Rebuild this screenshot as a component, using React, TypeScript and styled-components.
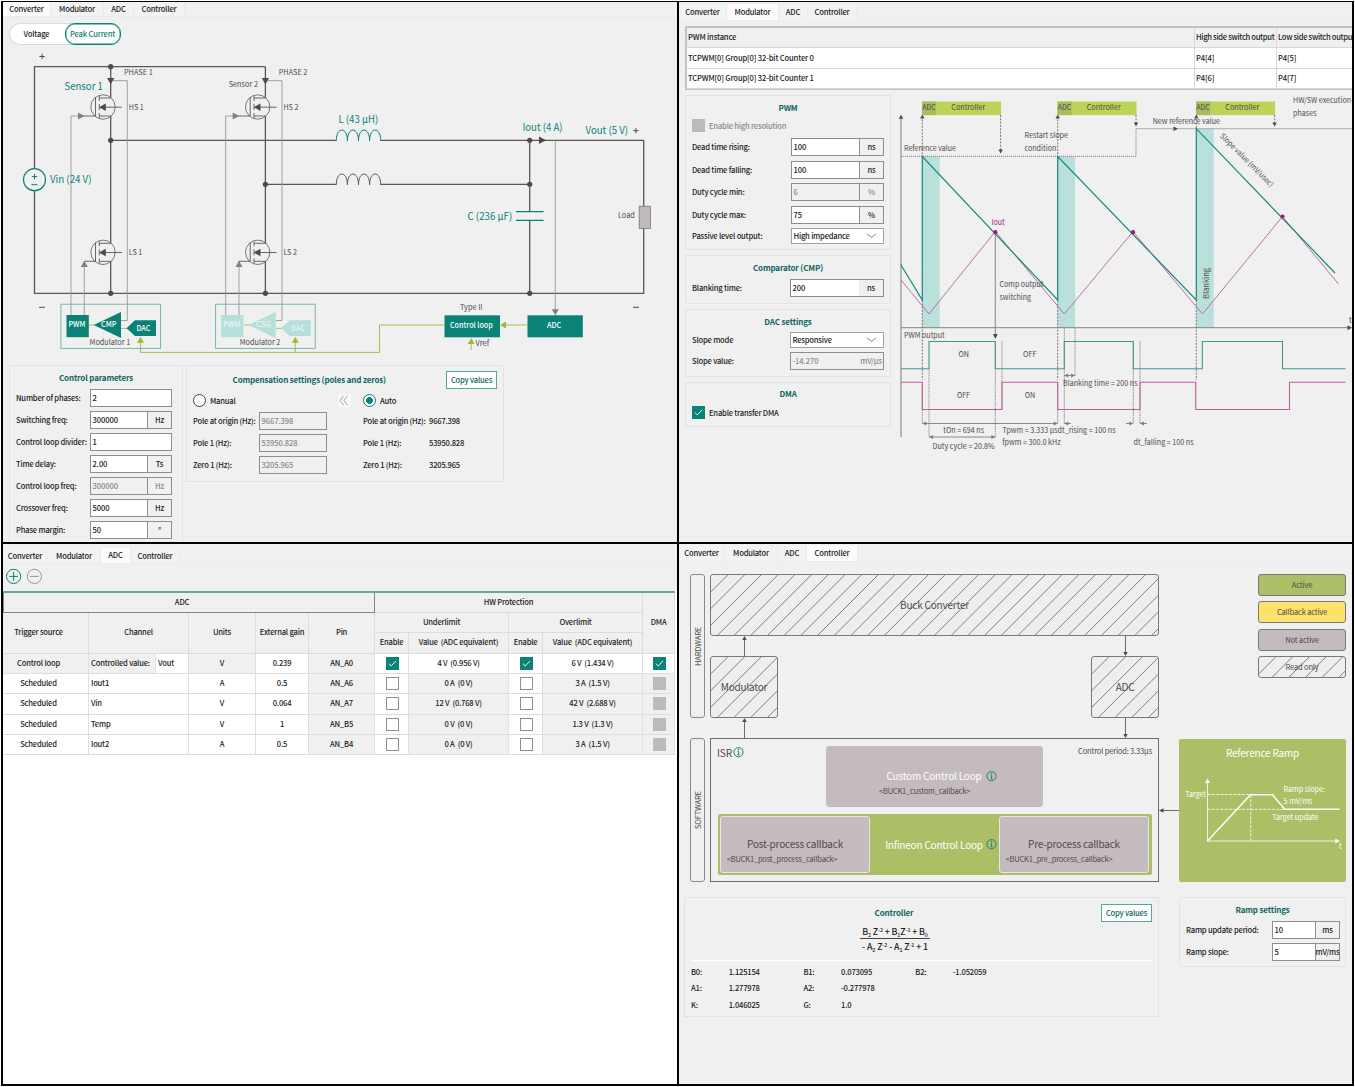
import React from "react";
import styled, { createGlobalStyle, css } from "styled-components";

const c = {
  bg: "#f0f0f0",
  teal: "#0a8276",
  tealDark: "#11665e",
  tealLight: "#b5dfd9",
  green: "#9cba3c",
  olive: "#adbf66",
  lime: "#bbd356",
  mauve: "#c4bbbe",
  magenta: "#9b1a6c",
  ink: "#1c1c1c",
  dark: "#4f4a4b",
  line: "#5c5657",
  thin: "#9b9596",
  group: "#e2e2e2",
  field: "#8e8e8e",
};

const font = `"Noto Sans CJK SC", "Noto Sans", sans-serif`;

const Global = createGlobalStyle`
  *, *::before, *::after { box-sizing: border-box; }
  body { margin: 0; background: #fff; font-family: ${font}; font-size: 7.6px; line-height: 10px; font-weight: 500; letter-spacing: -0.2px; color: ${c.ink}; }
  button { letter-spacing: inherit; }
  svg { display: block; }
  svg text { font-family: ${font}; font-weight: 400; letter-spacing: 0; }
`;

/* ---------- shell ---------- */

const Frame = styled.main`
  width: 1353px;
  height: 1085px;
  margin: 1px 0 0 1px;
  display: grid;
  grid-template: 540px 540px / 674px 673px;
  gap: 2px;
  padding: 1px 2px 2px 2px;
  background: #000;
`;

const Panel = styled.section<{ $bg?: string }>`
  background: ${(p) => p.$bg || c.bg};
  overflow: hidden;
  display: flex;
  flex-direction: column;
  min-width: 0;
`;

const TabBar = styled.nav<{ $top: number; $h: number }>`
  display: flex;
  flex: none;
  height: ${(p) => p.$top + p.$h}px;
  padding-top: ${(p) => p.$top}px;
  border-bottom: 1px solid #ebebeb;
  background: ${c.bg};
`;

const Tab = styled.button<{ $w: number; $on?: boolean }>`
  width: ${(p) => p.$w}px;
  padding: 0 0 ${(p) => (p.$on ? 1 : 0)}px;
  border: 0;
  border-right: 1px solid #eaeaea;
  background: ${(p) => (p.$on ? "#fbfbfb" : "#f2f2f2")};
  font: inherit;
  color: inherit;
  text-align: center;
  white-space: nowrap;
`;

const tabNames = ["Converter", "Modulator", "ADC", "Controller"];

function Tabs({ active, widths, top, h }: { active: number; widths: number[]; top: number; h: number }) {
  return (
    <TabBar $top={top} $h={h}>
      {tabNames.map((n, i) => (
        <Tab key={n} $w={widths[i]} $on={i === active}>
          {n}
        </Tab>
      ))}
    </TabBar>
  );
}

const Group = styled.section<{ $w: number; $h: number; $pt?: number; $px?: number }>`
  flex: none;
  width: ${(p) => p.$w}px;
  height: ${(p) => p.$h}px;
  padding: ${(p) => p.$pt ?? 7}px ${(p) => p.$px ?? 6}px 0;
  border: 1px solid ${c.group};
`;

const Title = styled.h3<{ $mb?: number }>`
  margin: 0 0 ${(p) => p.$mb ?? 5}px;
  font-size: 8px;
  line-height: 10px;
  font-weight: 700;
  letter-spacing: -0.15px;
  color: ${c.tealDark};
  text-align: center;
`;

const FormRow = styled.label<{ $pitch: number; $lw: number }>`
  display: grid;
  grid-template-columns: ${(p) => p.$lw}px auto;
  align-items: center;
  justify-content: start;
  height: ${(p) => p.$pitch}px;
  white-space: nowrap;
`;

const Label = styled.span<{ $muted?: boolean }>`
  white-space: nowrap;
  color: ${(p) => (p.$muted ? "#8a8a8a" : "inherit")};
`;

const FieldBox = styled.span<{ $w: number; $off?: boolean; $h?: number }>`
  display: flex;
  width: ${(p) => p.$w}px;
  height: ${(p) => p.$h ?? 18}px;
  border: 1px solid ${c.field};
  background: ${(p) => (p.$off ? c.bg : "#fff")};
  color: ${(p) => (p.$off ? "#8b8b8b" : c.ink)};
`;

const FieldValue = styled.span`
  flex: 1;
  display: flex;
  align-items: center;
  padding-left: 1.5px;
  letter-spacing: -0.1px;
`;

const Unit = styled.span<{ $bare?: boolean }>`
  width: 24px;
  display: flex;
  align-items: center;
  justify-content: center;
  background: ${c.bg};
  border-left: ${(p) => (p.$bare ? 0 : 1)}px solid ${c.field};
`;

type FieldProps = { value: string; unit?: string; w: number; off?: boolean; h?: number; bare?: boolean };
function Field({ value, unit, w, off, h, bare }: FieldProps) {
  return (
    <FieldBox $w={w} $off={off} $h={h}>
      <FieldValue>{value}</FieldValue>
      {unit && <Unit $bare={bare}>{unit}</Unit>}
    </FieldBox>
  );
}

const SelectBox = styled(FieldBox)`
  align-items: center;
  justify-content: space-between;
  padding: 0 6px 0 1.5px;
  border-color: #a2a2a2;
`;

function Select({ value, w }: { value: string; w: number }) {
  return (
    <SelectBox $w={w} $h={16}>
      {value}
      <svg width="11" height="6" viewBox="0 0 11 6" fill="none" stroke="#7d7d7d" strokeWidth="0.9">
        <path d="M0.8 0.8L5.5 4.4L10.2 0.8" />
      </svg>
    </SelectBox>
  );
}

const CopyButton = styled.button<{ $w: number }>`
  width: ${(p) => p.$w}px;
  height: 18px;
  padding: 0;
  border: 1px solid #53a79e;
  background: #fff;
  color: ${c.tealDark};
  font: inherit;
  text-align: center;
`;

const Box = styled.span<{ $kind: "on" | "off" | "dis" }>`
  display: inline-flex;
  align-items: center;
  justify-content: center;
  flex: none;
  width: 13px;
  height: 13px;
  ${(p) =>
    p.$kind === "on"
      ? css`background: ${c.teal};`
      : p.$kind === "dis"
        ? css`background: #bfbaba;`
        : css`background: #fff; border: 1px solid #8f8f8f;`}
`;

function Check({ kind }: { kind: "on" | "off" | "dis" }) {
  return (
    <Box $kind={kind}>
      {kind === "on" && (
        <svg width="9" height="7" viewBox="0 0 9 7" fill="none" stroke="#fff" strokeWidth="0.9">
          <path d="M0.8 3.6L3.2 5.9L8.2 0.9" />
        </svg>
      )}
    </Box>
  );
}

const CheckRow = styled.div`
  display: flex;
  align-items: center;
  gap: 4px;
  height: 13px;
`;

/* svg label whose y is its vertical centre */
type TProps = {
  x: number; y: number; w?: number; s?: number; fill?: string; a?: "start" | "middle"; weight?: number; children: string; rot?: number;
};
function T({ x, y, w, s = 7.6, fill = c.dark, a = "start", weight = 400, children, rot }: TProps) {
  return (
    <text
      x={x}
      y={y + s * 0.36}
      fontSize={s}
      fill={fill}
      textAnchor={a}
      textLength={w}
      lengthAdjust="spacingAndGlyphs"
      style={{ fontWeight: weight }}
      transform={rot ? `rotate(${rot} ${x} ${y})` : undefined}
    >
      {children}
    </text>
  );
}

/* arrow head with its tip at x,y */
function Head({ x, y, d, l = 5, h = 2.5, fill = c.dark }: { x: number; y: number; d: "u" | "d" | "l" | "r"; l?: number; h?: number; fill?: string }) {
  const p = {
    u: `${x},${y} ${x - h},${y + l} ${x + h},${y + l}`,
    d: `${x},${y} ${x - h},${y - l} ${x + h},${y - l}`,
    l: `${x},${y} ${x + l},${y - h} ${x + l},${y + h}`,
    r: `${x},${y} ${x - l},${y - h} ${x - l},${y + h}`,
  }[d];
  return <polygon points={p} fill={fill} />;
}

/* ---------- converter ---------- */

const ToggleRow = styled.div`
  flex: none;
  height: 31px;
  padding: 6px 0 0 6px;
`;

const Toggle = styled.div`
  display: flex;
  width: 112px;
  height: 22px;
  border-radius: 11px;
  background: #fff;
  box-shadow: inset 0 0 0 1px #d9d9d9;
`;

const ToggleItem = styled.button<{ $on?: boolean }>`
  width: 56px;
  border: ${(p) => (p.$on ? `1.5px solid ${c.teal}` : "0")};
  box-shadow: ${(p) => (p.$on ? `inset 0 0 0 0.4px ${c.teal}` : "none")};
  border-radius: 10px;
  background: ${(p) => (p.$on ? "#fff" : "transparent")};
  color: ${(p) => (p.$on ? c.teal : c.ink)};
  letter-spacing: -0.15px;
  padding: 0 1px 0 0;
  font: inherit;
  white-space: nowrap;
`;

function Mosfet({ y }: { y: number }) {
  return (
    <g transform={`translate(0 ${y})`} fill="none" stroke={c.line}>
      <circle cx="103" cy="0" r="12.2" strokeWidth="0.8" />
      <path d="M95.5 -10V9H84M99.3 -11V-6M99.3 -3V3M99.3 6V11M99.3 -9H110.7M99.3 9H110.7M104 0.2H122" strokeWidth="0.9" />
      <polygon points="99,0.2 105.8,-3.6 105.8,4" fill={c.dark} stroke="none" />
    </g>
  );
}

function Phase({ n, dx, faint }: { n: number; dx: number; faint?: boolean }) {
  const fill = faint ? c.tealLight : c.teal;
  const txt = faint ? "#e9f6f4" : "#fff";
  return (
    <g transform={`translate(${dx} 0)`}>
      <path d="M71 315V116H84M84.3 315V261.3M110.7 80.7H127.3V320.5H121" fill="none" stroke={c.thin} strokeWidth="0.9" />
      <Mosfet y={107} />
      <Mosfet y={252.3} />
      <path d="M110.7 66.7V98M110.7 116V243.3M110.7 261.3V293.3" stroke={c.line} strokeWidth="1.3" />
      <Head x={110.7} y={84.5} d="d" l={6.5} h={3.6} />
      <Head x={84.5} y={116} d="r" l={6.5} h={3.6} fill="#857f80" />
      <Head x={84.3} y={261} d="u" l={6} h={3.6} fill="#857f80" />
      <circle cx="110.7" cy="293.3" r="2.6" fill={c.dark} />
      <circle cx="110.7" cy={n === 1 ? 140.3 : 184.3} r="2.6" fill={c.dark} />
      <T x={124} y={72.3} w={28.7}>{`PHASE ${n}`}</T>
      <T x={128.7} y={107} w={15}>{`HS ${n}`}</T>
      <T x={128.7} y={252.3} w={13.5}>{`LS ${n}`}</T>
      <rect x="60.9" y="304.2" width="99.6" height="44.2" fill="none" stroke="#6bb0a8" strokeWidth="0.9" />
      <path d="M89 325H95M121 328.4H128" stroke={c.green} strokeWidth="0.8" />
      <rect x="66.5" y="315" width="22.3" height="22.2" fill={fill} />
      <polygon points="93.7,325 121,312 121,338" fill={fill} />
      <polygon points="126.5,328.3 135,320.3 156,320.3 156,336 135,336" fill={fill} />
      <T x={68.4} y={324.7} w={17} fill={txt} weight={500}>PWM</T>
      <T x={101} y={324.7} w={15.5} fill={txt} weight={500}>{faint ? "CSG" : "CMP"}</T>
      <T x={136.4} y={328} w={14} fill={txt} weight={500}>DAC</T>
      <T x={n === 1 ? 89.5 : 85} y={342.6} w={40.7}>{`Modulator ${n}`}</T>
    </g>
  );
}

const CircuitSvg = styled.svg`
  flex: none;
`;

function Circuit() {
  const coil = (x: number, y: number) =>
    `M${x} ${y}` + [0, 1, 2, 3].map(() => `c0 -14.4 11.1 -14.4 11.1 0`).join("");
  return (
    <CircuitSvg width="674" height="317" viewBox="3 48 674 317">
      <path d="M380.5 140.3H643.7V293.3H34.5V66.7H265.4M110.7 140.3H336.3M265.4 184.3H336.3M380.5 184.3H529.7M529.7 140.3V211.7M529.7 220.3V293.3" fill="none" stroke={c.line} strokeWidth="1.3" />
      <circle cx="110.7" cy="66.7" r="2.6" fill={c.dark} />
      <circle cx="34.5" cy="179.7" r="11" fill={c.bg} stroke={c.teal} strokeWidth="1.2" />
      <path d="M31.7 176.6H37.3M34.5 173.8V179.4M31.5 184.7H37.5" stroke={c.teal} strokeWidth="1" />
      <path d="M39.4 56.5H44.8M42.1 53.8V59.2M39 307.3H45M633.2 130.7H638.6M635.9 128V133.4M633 307.3H639" stroke={c.dark} strokeWidth="1" />
      <path d={coil(336.3, 140.8)} fill="none" stroke={c.teal} strokeWidth="1" />
      <path d={coil(336.3, 184.8)} fill="none" stroke={c.line} strokeWidth="1" />
      <path d="M555.3 140.3V310" stroke={c.thin} strokeWidth="0.9" />
      <path d="M516 211.7H543.6M516 220.3H543.6" stroke={c.teal} strokeWidth="1.2" />
      <circle cx="529.7" cy="140.3" r="2.6" fill={c.dark} />
      <circle cx="529.7" cy="184.3" r="2.6" fill={c.dark} />
      <circle cx="529.7" cy="293.3" r="2.6" fill={c.dark} />
      <Head x={546} y={140.3} d="r" l={7} h={3.8} />
      <rect x="639.2" y="206.2" width="11.3" height="22.2" fill="#bfbbbb" stroke="#7b7576" strokeWidth="0.8" />
      <Phase n={1} dx={0} />
      <Phase n={2} dx={154.7} faint />
      <path d="M527 325H505M444 325H379.5V352.4H140.5V342M295.3 352.4V342M471.2 350V343" fill="none" stroke={c.green} strokeWidth="0.9" />
      <Head x={140.5} y={336.7} d="u" l={6} h={3.5} fill={c.green} />
      <Head x={295.3} y={336.7} d="u" l={6} h={3.5} fill={c.green} />
      <Head x={471.2} y={338} d="u" l={6} h={3.5} fill={c.green} />
      <Head x={500} y={325} d="l" l={6} h={3.5} fill={c.green} />
      <Head x={555.3} y={315.3} d="d" l={6} h={3.5} fill="#857f80" />
      <rect x="444.5" y="315.3" width="55.5" height="22" fill={c.teal} />
      <rect x="527.5" y="315.3" width="55.3" height="22" fill={c.teal} />
      <T x={450} y={324.8} w={42.7} fill="#fff" weight={500}>Control loop</T>
      <T x={547} y={324.8} w={14.3} fill="#fff" weight={500}>ADC</T>
      <T x={460} y={306.8} w={22.5}>Type II</T>
      <T x={475.5} y={343} w={13.7}>Vref</T>
      <T x={618} y={215.7} w={16.8}>Load</T>
      <T x={228.7} y={84.7} w={29.3}>Sensor 2</T>
      <T x={64.5} y={86.5} w={38.3} s={10.4} fill={c.teal}>Sensor 1</T>
      <T x={50} y={179.7} w={41.5} s={10.4} fill={c.teal}>Vin (24 V)</T>
      <T x={338.5} y={119.2} w={39.7} s={10.4} fill={c.teal}>L (43 μH)</T>
      <T x={522.5} y={127} w={40} s={10.4} fill={c.teal}>Iout (4 A)</T>
      <T x={585.5} y={130} w={42.5} s={10.4} fill={c.teal}>Vout (5 V)</T>
      <T x={467.5} y={216} w={44.7} s={10.4} fill={c.teal}>C (236 μF)</T>
    </CircuitSvg>
  );
}

const Bottom = styled.div`
  display: flex;
  gap: 3px;
  padding-left: 6px;
`;

const params: [string, string, string?, boolean?][] = [
  ["Number of phases:", "2"],
  ["Switching freq:", "300000", "Hz"],
  ["Control loop divider:", "1"],
  ["Time delay:", "2.00", "Ts"],
  ["Control loop freq:", "300000", "Hz", true],
  ["Crossover freq:", "5000", "Hz"],
  ["Phase margin:", "50", "°"],
];

const CompHead = styled.header`
  display: flex;
  align-items: flex-start;
  justify-content: flex-end;
  gap: 60px;
  height: 22px;
  & > h3 { margin-top: 4px; white-space: nowrap; }
`;

const CompGrid = styled.div`
  display: grid;
  grid-template-columns: 66px 104px 66px auto;
  align-items: center;
  grid-auto-rows: 22.1px;
  white-space: nowrap;
`;

const RadioRow = styled.div`
  display: grid;
  grid-template-columns: 145px 25px auto;
  align-items: center;
  height: 15px;
  margin-bottom: 2px;
`;

const Radio = styled.label`
  display: flex;
  align-items: center;
  gap: 4px;
`;

const Dot = styled.i<{ $on?: boolean }>`
  width: 13px;
  height: 13px;
  border-radius: 50%;
  border: 1px solid ${(p) => (p.$on ? c.teal : "#444")};
  background: ${(p) => (p.$on ? `radial-gradient(${c.teal} 0 3.1px, #fff 3.7px)` : "#fff")};
`;

const Collapse = styled.button`
  width: 13px;
  height: 13px;
  padding: 0 0 0 1px;
  border: 0;
  border-radius: 2px;
  background: #f9f9f9;
`;

const comp = [
  ["Pole at origin (Hz):", "9667.398"],
  ["Pole 1 (Hz):", "53950.828"],
  ["Zero 1 (Hz):", "3205.965"],
];

function Converter() {
  return (
    <Panel>
      <Tabs active={0} widths={[48, 53, 30, 51]} top={0} h={15} />
      <ToggleRow>
        <Toggle>
          <ToggleItem>Voltage</ToggleItem>
          <ToggleItem $on>Peak Current</ToggleItem>
        </Toggle>
      </ToggleRow>
      <Circuit />
      <Bottom>
        <Group $w={174} $h={190}>
          <Title $mb={3.5}>Control parameters</Title>
          {params.map(([l, v, u, off]) => (
            <FormRow key={l} $pitch={22.15} $lw={74}>
              <Label>{l}</Label>
              <Field value={v} unit={u} w={82} off={off} />
            </FormRow>
          ))}
        </Group>
        <Group $w={318} $h={117} $pt={5}>
          <CompHead>
            <Title>Compensation settings (poles and zeros)</Title>
            <CopyButton $w={51}>Copy values</CopyButton>
          </CompHead>
          <RadioRow>
            <Radio><Dot />Manual</Radio>
            <Collapse>
              <svg width="10" height="11" viewBox="0 0 10 11" fill="none" stroke="#8b8b8b" strokeWidth="0.8">
                <path d="M4.6 0.7L1 5.5L4.6 10.3M8.6 0.7L5 5.5L8.6 10.3" />
              </svg>
            </Collapse>
            <Radio><Dot $on />Auto</Radio>
          </RadioRow>
          <CompGrid>
            {comp.map(([l, v]) => (
              <React.Fragment key={l}>
                <Label>{l}</Label>
                <Field value={v} w={68} off />
                <Label>{l}</Label>
                <Label>{v}</Label>
              </React.Fragment>
            ))}
          </CompGrid>
        </Group>
      </Bottom>
    </Panel>
  );
}

/* ---------- modulator ---------- */

const PwmTable = styled.div`
  flex: none;
  margin: 5px 0 0 6px;
  display: grid;
  grid-template: 20px 21px 20px / 508px 82px 77px;
  border: 2px solid #c3c3c3;
  border-right: 0;
  height: 64px;
`;

const PwmCell = styled.span<{ $head?: boolean; $tight?: boolean }>`
  display: flex;
  align-items: center;
  padding: 0 0 1px 1px;
  white-space: nowrap;
  letter-spacing: ${(p) => (p.$tight ? -0.31 : -0.16)}px;
  background: ${(p) => (p.$head ? c.bg : "#fff")};
  border-right: 1px solid #d8d8d8;
  border-bottom: 1px solid #d8d8d8;
`;

const pwmRows = [
  ["PWM instance", "High side switch output", "Low side switch output"],
  ["TCPWM[0] Group[0] 32-bit Counter 0", "P4[4]", "P4[5]"],
  ["TCPWM[0] Group[0] 32-bit Counter 1", "P4[6]", "P4[7]"],
];

const ModBody = styled.div`
  display: flex;
  padding: 5px 0 0 6px;
`;

const Stack = styled.div<{ $gap: number }>`
  display: flex;
  flex-direction: column;
  gap: ${(p) => p.$gap}px;
`;

const PwmFields = styled(Stack)`
  margin-top: 4px;
`;

const MvUnit = styled.span`
  align-self: center;
  padding-right: 1px;
`;

const SlopeSvg = styled.svg`
  flex: none;
`;

function Slope() {
  const dash = { stroke: "#6d6768", strokeWidth: 0.9, strokeDasharray: "2 1.3", fill: "none" };
  return (
    <SlopeSvg width="461" height="368" viewBox="891 95 461 368">
      {[922.3, 1057.7, 1196.3].map((x, i) => (
        <g key={x}>
          <rect x={x} y={i === 2 ? 128.7 : 156.5} width="17.4" height={i === 2 ? 199 : 171.2} fill="#bae0db" />
          <rect x={x - 0.2} y="101.5" width="79" height="13.6" fill={c.lime} />
          <rect x={x - 0.2} y="101.5" width="14" height="13.6" fill="#a8bd5c" />
          <T x={x} y={107.3} w={13.5}>ADC</T>
          <T x={x + 29} y={107.3} w={34}>Controller</T>
          <path d={`M${x} 116V${i === 2 ? 128 : 156}M${x} 300V380`} {...dash} />
          <path d={`M${x + 78.3} 115V${i === 0 ? 150 : 123}`} {...dash} />
          <Head x={x} y={114.5} d="u" l={4} h={2.2} />
          <Head x={x + 78.3} y={i === 0 ? 153.5 : 126.5} d="d" l={4} h={2.2} />
        </g>
      ))}
      <path d="M901 437V118" stroke="#8a8586" strokeWidth="1.1" />
      <Head x={901} y={114.8} d="u" l={4} h={2.3} />
      <path d="M901 327.7H1350" stroke="#7d7879" strokeWidth="0.9" />
      <Head x={1352} y={327.7} d="r" l={4.5} h={2.5} />
      <path d="M901 156.3H1136V128.7H1352" fill="none" stroke="#7b7677" strokeWidth="0.9" strokeDasharray="1.2 0.8" />
      <Head x={1178} y={128.7} d="r" l={4.5} h={2.3} />
      <path d="M995.3 232V336" stroke="#7d7879" strokeWidth="0.9" />
      <Head x={995.3} y={339} d="d" l={5} h={2.4} />
      <path
        d="M922.3 382V423.5M929 368V437M995.3 341V437M1002 341V409M1057.7 382V423.5M1064.3 328V423.5M1075 328V375.5M1133.3 341V423.5M1140 341V423.5"
        fill="none" stroke="#807b7c" strokeWidth="0.9" strokeDasharray="1.4 0.9"
      />
      <path d="M901 280L929 314L995.3 231.5L1064.3 314L1133 231.5L1202.5 314L1282.5 216.5L1338.5 284" fill="none" stroke="#b7629a" strokeWidth="0.9" />
      <path d="M901 265L922.3 300V156.5L1057.7 300V156.5L1196.3 300V128.7L1335 273" fill="none" stroke="#16897c" strokeWidth="1.2" />
      <path d="M901 368.7H929V341.5H995.3V368.7H1064.3V341.5H1133.3V368.7H1202.3V341.5H1282.5V368.7H1345.5" fill="none" stroke="#3f978d" strokeWidth="1.1" />
      <path d="M901 382.2H922.3V409.5H1002V382.2H1057.7V409.5H1140V382.2H1195.7V409.5H1289.5V382.2H1345.5" fill="none" stroke="#b7629a" strokeWidth="1.1" />
      {[[995.3, 232.2], [1133, 232.2], [1282.5, 216.5]].map(([x, y]) => (
        <circle key={x} cx={x} cy={y} r="2.1" fill={c.magenta} />
      ))}
      <path d="M922.3 423.5H1057.7M1064.3 423.5H1071M1126 423.5H1133M1140 423.5H1147M929 437H995.3M1064.3 375.5H1075" stroke="#807b7c" strokeWidth="0.9" />
      {([[922.3, 423.5, "l"], [1057.7, 423.5, "r"], [1064.3, 423.5, "l"], [1133.3, 423.5, "r"], [1140, 423.5, "l"], [929, 437, "l"], [995.3, 437, "r"], [1064.3, 375.5, "l"], [1075, 375.5, "r"]] as [number, number, "l" | "r"][]).map(([x, y, d]) => (
        <Head key={`${x}-${y}`} x={x} y={y} d={d} l={4} h={2} fill="#807b7c" />
      ))}
      <T x={904} y={148.3} w={52}>Reference value</T>
      <T x={1024.5} y={135.7} w={43.5}>Restart slope</T>
      <T x={1024.5} y={148.2} w={31.8}>condition</T>
      <T x={1152.7} y={121} w={67.3}>New reference value</T>
      <T x={1293} y={100.5} w={58}>HW/SW execution</T>
      <T x={1293} y={113} w={23.5}>phases</T>
      <T x={1247} y={160} a="middle" rot={45} w={72}>Slope value (mV/usec)</T>
      <T x={1206.5} y={299} rot={-90} w={31}>Blanking</T>
      <T x={991.5} y={222.3} w={13.2} fill={c.magenta}>Iout</T>
      <T x={999.5} y={284.7} w={44}>Comp output</T>
      <T x={999.5} y={297.2} w={31.5}>switching</T>
      <T x={1349} y={320.3}>t</T>
      <T x={904} y={335} w={40.7}>PWM output</T>
      <T x={958.5} y={354.6} w={10.5}>ON</T>
      <T x={957} y={395.6} w={13}>OFF</T>
      <T x={1023} y={354.6} w={13.5}>OFF</T>
      <T x={1024.7} y={395.6} w={10.5}>ON</T>
      <T x={1063} y={383} w={74.5}>Blanking time = 200 ns</T>
      <T x={943.3} y={430} w={40.7}>tOn = 694 ns</T>
      <T x={932.5} y={446.3} w={62}>Duty cycle = 20.8%</T>
      <T x={1002.5} y={430} w={55}>Tpwm = 3.333 μs</T>
      <T x={1057.5} y={430} w={58}>dt_rising = 100 ns</T>
      <T x={1002.3} y={442} w={58.3}>fpwm = 300.0 kHz</T>
      <T x={1133.5} y={442} w={60}>dt_falling = 100 ns</T>
    </SlopeSvg>
  );
}

function Modulator() {
  const rows: [string, string, string, boolean?][] = [
    ["Dead time rising:", "100", "ns"],
    ["Dead time falling:", "100", "ns"],
    ["Duty cycle min:", "6", "%", true],
    ["Duty cycle max:", "75", "%"],
  ];
  return (
    <Panel>
      <Tabs active={1} widths={[48, 52, 29, 49]} top={2} h={17} />
      <PwmTable>
        {pwmRows.map((r, i) =>
          r.map((t, j) => (
            <PwmCell key={t} $head={i === 0} $tight={i === 0 && j > 0}>{t}</PwmCell>
          ))
        )}
      </PwmTable>
      <ModBody>
        <Stack $gap={5}>
          <Group $w={206} $h={155}>
            <Title $mb={6}>PWM</Title>
            <CheckRow>
              <Check kind="dis" />
              <Label $muted>Enable high resolution</Label>
            </CheckRow>
            <PwmFields $gap={0}>
              {rows.map(([l, v, u, off]) => (
                <FormRow key={l} $pitch={22.5} $lw={99}>
                  <Label>{l}</Label>
                  <Field value={v} unit={u} w={93} off={off} />
                </FormRow>
              ))}
              <FormRow $pitch={20} $lw={99}>
                <Label>Passive level output:</Label>
                <Select value="High impedance" w={93} />
              </FormRow>
            </PwmFields>
          </Group>
          <Group $w={206} $h={49}>
            <Title $mb={4}>Comparator (CMP)</Title>
            <FormRow $pitch={22} $lw={98}>
              <Label>Blanking time:</Label>
              <Field value="200" unit="ns" w={94} bare />
            </FormRow>
          </Group>
          <Group $w={206} $h={68}>
            <Title $mb={2}>DAC settings</Title>
            <FormRow $pitch={22} $lw={98}>
              <Label>Slope mode</Label>
              <Select value="Responsive" w={94} />
            </FormRow>
            <FormRow $pitch={20} $lw={98}>
              <Label>Slope value:</Label>
              <FieldBox $w={94} $off>
                <FieldValue>-14.270</FieldValue>
                <MvUnit>mV/μs</MvUnit>
              </FieldBox>
            </FormRow>
          </Group>
          <Group $w={206} $h={45} $pt={6}>
            <Title $mb={7}>DMA</Title>
            <CheckRow>
              <Check kind="on" />
              <Label>Enable transfer DMA</Label>
            </CheckRow>
          </Group>
        </Stack>
        <Slope />
      </ModBody>
    </Panel>
  );
}

/* ---------- ADC ---------- */

const ToolBar = styled.div`
  flex: none;
  display: flex;
  gap: 5px;
  height: 27px;
  padding: 4px 0 0 3px;
  background: ${c.bg};
`;

const AdcTable = styled.table`
  width: 672px;
  table-layout: fixed;
  border-collapse: separate;
  border-spacing: 0;
  border-top: 2px solid #6ea59e;
  color: ${c.ink};
  font-size: 7.6px;
  line-height: 10px;
`;

const Th = styled.th<{ $frame?: boolean; $shift?: number }>`
  padding: 0 ${(p) => p.$shift ?? 0}px 1px 0;
  font-weight: 500;
  white-space: nowrap;
  background: ${c.bg};
  border-right: 1px solid #dcdcdc;
  border-bottom: 1px solid #dcdcdc;
  ${(p) => p.$frame && css`border: 1px solid #808784; border-top: 0;`}
`;

const Td = styled.td<{ $gray?: boolean; $left?: boolean; $shift?: number }>`
  height: 20.4px;
  padding: 0 ${(p) => p.$shift ?? 0}px 1px ${(p) => (p.$left ? 2 : 0)}px;
  text-align: ${(p) => (p.$left ? "left" : "center")};
  white-space: nowrap;
  background: ${(p) => (p.$gray ? c.bg : "#fff")};
  border-right: 1px solid #e0e0e0;
  border-bottom: 1px solid #dedede;
  & > span { vertical-align: middle; margin: 1px 0 0 2px; }
`;

const colW = [86, 67, 33, 67, 53, 66, 34, 100, 34, 100, 32];

const adcRows = [
  ["Scheduled", "Iout1", "A", "0.5", "AN_A6", "0 A \u00a0(0 V)", "3 A \u00a0(1.5 V)"],
  ["Scheduled", "Vin", "V", "0.064", "AN_A7", "12 V \u00a0(0.768 V)", "42 V \u00a0(2.688 V)"],
  ["Scheduled", "Temp", "V", "1", "AN_B5", "0 V \u00a0(0 V)", "1.3 V \u00a0(1.3 V)"],
  ["Scheduled", "Iout2", "A", "0.5", "AN_B4", "0 A \u00a0(0 V)", "3 A \u00a0(1.5 V)"],
];

function Adc() {
  return (
    <Panel $bg="#fff">
      <Tabs active={2} widths={[45, 53, 30, 49]} top={4} h={16} />
      <ToolBar>
        <svg width="16" height="16" viewBox="0 0 16 16" fill="none" stroke={c.teal}>
          <circle cx="7.6" cy="8.4" r="7.1" />
          <path d="M7.6 4V12.8M3.2 8.4H12" />
        </svg>
        <svg width="16" height="16" viewBox="0 0 16 16" fill="none" stroke="#979797">
          <circle cx="7.4" cy="8.4" r="7.1" />
          <path d="M3 8.4H11.8" />
        </svg>
      </ToolBar>
      <AdcTable>
        <colgroup>{colW.map((w, i) => <col key={i} style={{ width: w }} />)}</colgroup>
        <thead>
          <tr style={{ height: 19.5 }}>
            <Th colSpan={6} $frame $shift={14}>ADC</Th>
            <Th colSpan={4}>HW Protection</Th>
            <Th rowSpan={3}>DMA</Th>
          </tr>
          <tr style={{ height: 20.5 }}>
            <Th rowSpan={2} $shift={14}>Trigger source</Th>
            <Th rowSpan={2} colSpan={2}>Channel</Th>
            <Th rowSpan={2}>Units</Th>
            <Th rowSpan={2}>External gain</Th>
            <Th rowSpan={2}>Pin</Th>
            <Th colSpan={2}>Underlimit</Th>
            <Th colSpan={2}>Overlimit</Th>
          </tr>
          <tr style={{ height: 20.5 }}>
            <Th>Enable</Th>
            <Th>{"Value \u00a0(ADC equivalent)"}</Th>
            <Th>Enable</Th>
            <Th>{"Value \u00a0(ADC equivalent)"}</Th>
          </tr>
        </thead>
        <tbody>
          <tr>
            <Td $gray $shift={14}>Control loop</Td>
            <Td $gray $left>Controlled value:</Td>
            <Td $left>Vout</Td>
            <Td $gray>V</Td>
            <Td>0.239</Td>
            <Td $gray>AN_A0</Td>
            <Td><Check kind="on" /></Td>
            <Td>{"4 V \u00a0(0.956 V)"}</Td>
            <Td><Check kind="on" /></Td>
            <Td>{"6 V \u00a0(1.434 V)"}</Td>
            <Td><Check kind="on" /></Td>
          </tr>
          {adcRows.map((r) => (
            <tr key={r[1]}>
              <Td $shift={14}>{r[0]}</Td>
              <Td $left colSpan={2}>{r[1]}</Td>
              <Td>{r[2]}</Td>
              <Td>{r[3]}</Td>
              <Td $gray>{r[4]}</Td>
              <Td><Check kind="off" /></Td>
              <Td $gray>{r[5]}</Td>
              <Td><Check kind="off" /></Td>
              <Td $gray>{r[6]}</Td>
              <Td $gray><Check kind="dis" /></Td>
            </tr>
          ))}
        </tbody>
      </AdcTable>
    </Panel>
  );
}

/* ---------- controller ---------- */

const CtlBody = styled.div`
  display: flex;
  flex-direction: column;
  padding: 12px 0 0 11px;
  color: ${c.dark};
  font-weight: 400;
`;

const Row = styled.div<{ $gap?: number }>`
  display: flex;
  gap: ${(p) => p.$gap ?? 0}px;
`;

const SideBar = styled.div`
  flex: none;
  width: 15px;
  height: 144px;
  border: 1px solid #8d8788;
  border-radius: 3px;
  display: flex;
  align-items: center;
  justify-content: center;
  writing-mode: vertical-rl;
  transform: rotate(180deg);
`;

const HwArea = styled.div`
  width: 449px;
  display: flex;
  flex-direction: column;
`;

const Spread = styled.div<{ $px?: number }>`
  display: flex;
  justify-content: space-between;
  padding: 0 ${(p) => p.$px ?? 0}px;
`;

const HatchBox = styled.div<{ $w: number; $h: number; $s?: number }>`
  position: relative;
  width: ${(p) => p.$w}px;
  height: ${(p) => p.$h}px;
  border: 1px solid #7d7778;
  border-radius: 3px;
  overflow: hidden;
  display: flex;
  align-items: center;
  justify-content: center;
  background: #eee;
  font-size: ${(p) => p.$s ?? 10}px;
  & > svg { position: absolute; inset: 0; }
  & > span { position: relative; }
`;

function Hatch({ w, h, s, children }: { w: number; h: number; s?: number; children: string }) {
  const lines = [];
  for (let t = 16.7; t < w + h; t += 16.7) lines.push(`M${t} 0L${t - h} ${h}`);
  return (
    <HatchBox $w={w} $h={h} $s={s}>
      <svg width={w} height={h}>
        <path d={lines.join("")} stroke="#5f595a" strokeWidth="0.75" />
      </svg>
      <span>{children}</span>
    </HatchBox>
  );
}

function VArrow({ d }: { d: "u" | "d" }) {
  return (
    <svg width="7" height="20" viewBox="0 0 7 20">
      <path d={d === "u" ? "M3.5 20V3" : "M3.5 0V17"} stroke="#6f696a" strokeWidth="1" />
      <Head x={3.5} y={d === "u" ? 0 : 20} d={d} l={4} h={2.2} />
    </svg>
  );
}

const Legend = styled.div`
  margin-left: 94px;
  display: flex;
  flex-direction: column;
  gap: 5.3px;
`;

const LegendItem = styled.div<{ $bg: string }>`
  width: 88px;
  height: 22px;
  display: flex;
  align-items: center;
  justify-content: center;
  border: 1px solid #7d7778;
  border-radius: 3px;
  background: ${(p) => p.$bg};
`;

const Isr = styled.div`
  width: 449px;
  height: 144px;
  margin-left: 5px;
  border: 1px solid #6f696a;
  padding: 7px 6px 0;
`;

const IsrTop = styled.div`
  display: grid;
  grid-template-columns: 109px 217px 109px;
  height: 61px;
`;

const IsrName = styled.div`
  display: flex;
  align-items: center;
  gap: 1px;
  height: 13px;
  font-size: 10.3px;
`;

const Period = styled.div`
  text-align: right;
`;

const Callback = styled.div<{ $light?: boolean; $line?: boolean; $w?: number }>`
  width: ${(p) => p.$w ?? 150}px;
  display: flex;
  flex-direction: column;
  align-items: center;
  background: ${c.mauve};
  border: 1px solid ${(p) => (p.$line ? "#e9e4e6" : c.mauve)};
  border-radius: 3px;
  color: ${(p) => (p.$light ? "#fff" : c.dark)};
  font-size: 10px;
  line-height: 14px;
  padding-top: ${(p) => (p.$line ? 20 : 22)}px;
`;

const CbTitle = styled.div<{ $ml?: number }>`
  display: flex;
  align-items: center;
  gap: 4px;
  margin-left: ${(p) => p.$ml ?? 0}px;
  white-space: nowrap;
`;

const CbName = styled.small<{ $shift: number }>`
  font-size: 7.5px;
  line-height: 12px;
  margin-top: 2px;
  margin-right: ${(p) => p.$shift}px;
  color: ${c.dark};
`;

const Loop = styled.div`
  margin: 7px 0 0 1px;
  width: 434px;
  height: 61px;
  padding: 2px 3px 2px 2px;
  border-radius: 2px;
  background: ${c.olive};
  display: flex;
  justify-content: space-between;
  align-items: stretch;
`;

const LoopTitle = styled(CbTitle)`
  color: #fff;
  font-size: 10px;
  gap: 3px;
`;

const RampCard = styled.div`
  width: 167px;
  height: 143px;
  margin-top: 1px;
  border-radius: 2px;
  background: ${c.olive};
  color: #fff;
  font-size: 10px;
  text-align: center;
  padding-top: 9px;
  & > svg { margin-top: 12px; }
`;

function Info() {
  return (
    <svg width="11" height="11" viewBox="0 0 11 11">
      <circle cx="5.5" cy="5.2" r="4.6" fill="none" stroke="#1f8277" strokeWidth="1" />
      <path d="M4.5 4.4H5.6V7.8M4.3 7.8H6.8" fill="none" stroke="#1f8277" strokeWidth="1" />
      <circle cx="5.5" cy="2.6" r="0.75" fill="#1f8277" />
    </svg>
  );
}

function Ramp() {
  return (
    <svg width="167" height="90" viewBox="1179 770 167 90">
      <g stroke="#fff" fill="none">
        <path d="M1207.5 841.5V782M1207.5 841H1336" strokeWidth="0.8" />
        <path d="M1207.5 794.5H1250M1207.5 809.3H1284M1250.7 795V841" strokeWidth="0.8" strokeDasharray="3 1.3" />
        <path d="M1207.5 841L1250.5 794.7H1272.5L1284.7 809.3H1339.7" strokeWidth="1.4" />
      </g>
      <Head x={1207.5} y={778.5} d="u" l={4.5} h={2.4} fill="#fff" />
      <Head x={1339.8} y={841} d="r" l={4.5} h={2.4} fill="#fff" />
      <T x={1185.3} y={794} w={20.5} fill="#fff">Target</T>
      <T x={1283.5} y={789.7} w={41.5} fill="#fff">Ramp slope:</T>
      <T x={1283.5} y={801.7} w={29} fill="#fff">5 mV/ms</T>
      <T x={1272.3} y={817} w={46.3} fill="#fff">Target update</T>
      <T x={1339} y={846.5} fill="#fff">t</T>
    </svg>
  );
}

const Lower = styled.div`
  display: flex;
  gap: 20px;
  padding: 15px 0 0 5px;
`;

const CtlHead = styled.div`
  display: grid;
  grid-template-columns: 1fr 51px;
  height: 21px;
  & > h3 { margin-top: 4px; padding-right: 4px; }
`;

const Fraction = styled.div`
  width: 70px;
  margin-left: 169px;
  color: ${c.ink};
  text-align: center;
  font-size: 8.8px;
  line-height: 13px;
  white-space: nowrap;
  & sub, & sup { font-size: 5.4px; line-height: 0; }
  & sub { vertical-align: -1.5px; }
  & sup { vertical-align: 3.2px; }
  & > div { letter-spacing: -0.1px; }
  & > div:first-child { border-bottom: 1px solid #444; height: 14px; }
  & > div:last-child { height: 15px; line-height: 16px; }
`;

const Rule = styled.hr`
  height: 1px;
  margin: 6px 0 3px;
  border: 0;
  background: #fff;
`;

const Coefs = styled.dl`
  margin: 0;
  display: grid;
  grid-template-columns: 37.7px 74.7px 37.7px 74.3px 37.5px auto;
  grid-auto-rows: 16.3px;
  align-items: center;
  & > * { margin: 0; }
`;

function Controller() {
  return (
    <Panel>
      <Tabs active={3} widths={[46, 53, 29, 51]} top={1} h={17} />
      <CtlBody>
        <Row $gap={5}>
          <SideBar>HARDWARE</SideBar>
          <HwArea>
            <Hatch w={449} h={62}>Buck Converter</Hatch>
            <Spread $px={30.5}><VArrow d="u" /><VArrow d="d" /></Spread>
            <Spread>
              <Hatch w={68} h={62}>Modulator</Hatch>
              <Hatch w={68} h={62}>ADC</Hatch>
            </Spread>
            <Spread $px={30.5}><VArrow d="u" /><VArrow d="d" /></Spread>
          </HwArea>
          <Legend>
            <LegendItem $bg={c.olive}>Active</LegendItem>
            <LegendItem $bg="#fee06c">Callback active</LegendItem>
            <LegendItem $bg={c.mauve}>Not active</LegendItem>
            <Hatch w={88} h={22} s={7.6}>Read only</Hatch>
          </Legend>
        </Row>
        <Row>
          <SideBar>SOFTWARE</SideBar>
          <Isr>
            <IsrTop>
              <IsrName>ISR<Info /></IsrName>
              <Callback $w={217} $light>
                <CbTitle $ml={14}>Custom Control Loop <Info /></CbTitle>
                <CbName $shift={20}>&lt;BUCK1_custom_callback&gt;</CbName>
              </Callback>
              <Period>Control period: 3.33μs</Period>
            </IsrTop>
            <Loop>
              <Callback $line>
                <CbTitle>Post-process callback</CbTitle>
                <CbName $shift={26}>&lt;BUCK1_post_process_callback&gt;</CbName>
              </Callback>
              <LoopTitle $ml={13}>Infineon Control Loop <Info /></LoopTitle>
              <Callback $line>
                <CbTitle>Pre-process callback</CbTitle>
                <CbName $shift={30}>&lt;BUCK1_pre_process_callback&gt;</CbName>
              </Callback>
            </Loop>
          </Isr>
          <svg width="20" height="144" viewBox="0 0 20 144">
            <path d="M20 72.5H3" stroke="#6f696a" />
            <Head x={0} y={72.5} d="l" l={4.5} h={2.3} />
          </svg>
          <RampCard>
            Reference Ramp
            <Ramp />
          </RampCard>
        </Row>
      </CtlBody>
      <Lower>
        <Group $w={475} $h={120} $pt={6}>
          <CtlHead>
            <Title>Controller</Title>
            <CopyButton $w={51}>Copy values</CopyButton>
          </CtlHead>
          <Fraction>
            <div>B<sub>2</sub> Z<sup>-2</sup> + B<sub>1</sub>Z<sup>-1</sup> + B<sub>0</sub></div>
            <div>- A<sub>2</sub> Z<sup>-2</sup> - A<sub>1</sub> Z<sup>-1</sup> + 1</div>
          </Fraction>
          <Rule />
          <Coefs>
            <dt>B0:</dt><dd>1.125154</dd><dt>B1:</dt><dd>0.073095</dd><dt>B2:</dt><dd>-1.052059</dd>
            <dt>A1:</dt><dd>1.277978</dd><dt>A2:</dt><dd>-0.277978</dd><dt /><dd />
            <dt>K:</dt><dd>1.046025</dd><dt>G:</dt><dd>1.0</dd>
          </Coefs>
        </Group>
        <Group $w={167} $h={70}>
          <Title $mb={4}>Ramp settings</Title>
          <FormRow $pitch={22.3} $lw={86}>
            <Label>Ramp update period:</Label>
            <Field value="10" unit="ms" w={68} />
          </FormRow>
          <FormRow $pitch={22.3} $lw={86}>
            <Label>Ramp slope:</Label>
            <Field value="5" unit="mV/ms" w={68} />
          </FormRow>
        </Group>
      </Lower>
    </Panel>
  );
}

export default function App() {
  return (
    <>
      <Global />
      <Frame>
        <Converter />
        <Modulator />
        <Adc />
        <Controller />
      </Frame>
    </>
  );
}
